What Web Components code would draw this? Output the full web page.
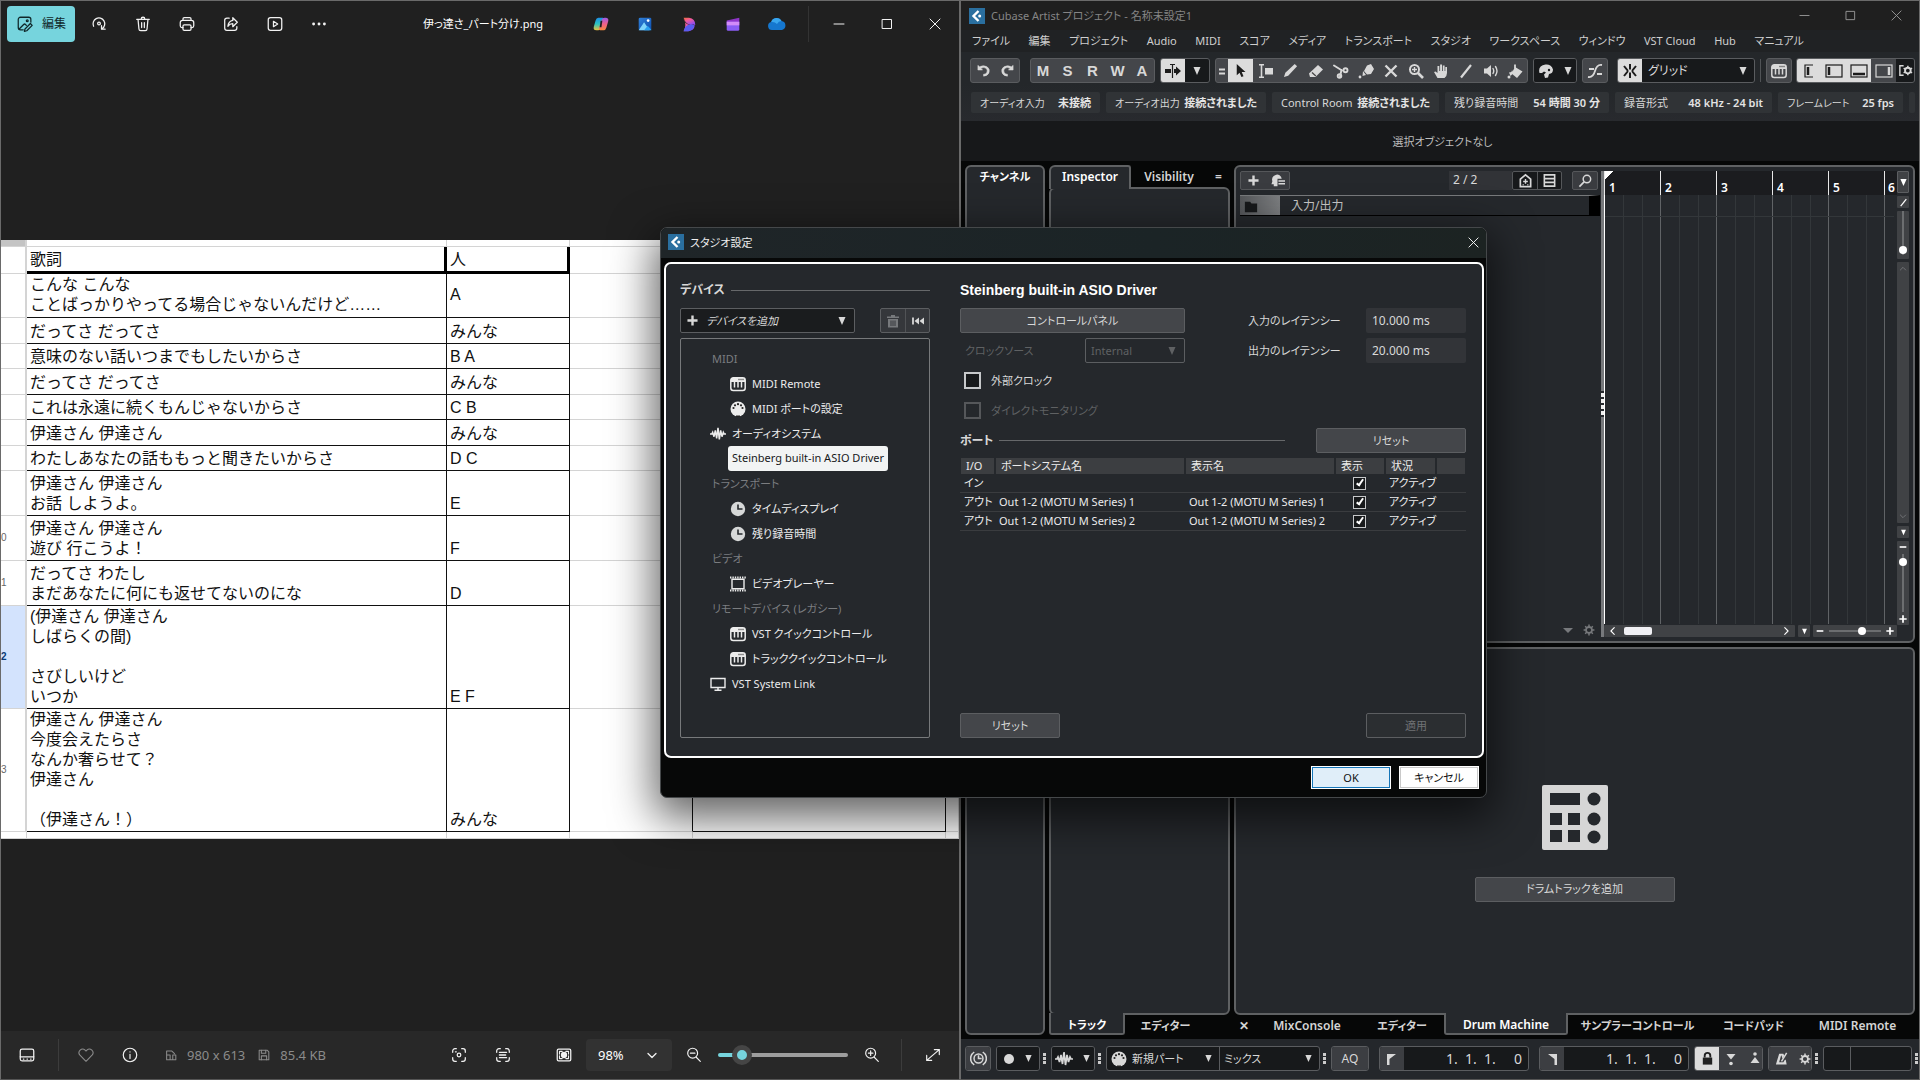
<!DOCTYPE html>
<html lang="ja">
<head>
<meta charset="utf-8">
<title>Desktop</title>
<style>
    html, body { height: 100%; margin: 0; background: #000; overflow: hidden; }
</style>
</head>
<body>
<desk-top>
    <photo-viewer></photo-viewer>
    <daw-window></daw-window>
    <studio-dialog slot="dialog"></studio-dialog>
</desk-top>

<script>
/* ---------- icons: viewBox size + markup ---------- */
const stroke = 'fill="none" stroke="currentColor" stroke-linecap="round" stroke-linejoin="round"';
const ICONS = {
    // photo viewer
    edit:    [20, `<g ${stroke} stroke-width="1.4"><path d="M16.5 8V5a2.5 2.5 0 0 0-2.500-2.500H5A2.500 2.500 0 0 0 2.500 5v9A2.500 2.500 0 0 0 5 16.500h3"/><path d="M3.500 15.500 8.500 10.500q1-1 2 0l1 1"/><circle cx="12.500" cy="6.300" r="1"/><path d="m10 15.500 6-6 2 2-6 6-2.700.7z"/></g>`],
    rotate:  [20, `<g ${stroke} stroke-width="1.4"><path d="M4 12.500A6.500 6.500 0 1 1 13.500 15.200"/><path d="M12.800 11.800v4h4"/><circle cx="10" cy="9.500" r="1.500"/></g>`],
    trash:   [20, `<g ${stroke} stroke-width="1.4"><path d="M3 4.800h14M8 4.500a2 2 0 0 1 4 0M4.500 5l1 10.500a2 2 0 0 0 2 1.900h5a2 2 0 0 0 2-1.900l1-10.500M8.500 8.500v5.500M11.500 8.500v5.500"/></g>`],
    print:   [20, `<g ${stroke} stroke-width="1.4"><path d="M5.500 6V4.500A1.500 1.500 0 0 1 7 3h6a1.500 1.500 0 0 1 1.500 1.500V6M5.500 14H4.500a2 2 0 0 1-2-2V8.500A2.500 2.500 0 0 1 5 6h10a2.500 2.500 0 0 1 2.500 2.500V12a2 2 0 0 1-2 2h-1"/><rect x="5.500" y="11" width="9" height="6" rx="1.500"/></g>`],
    share:   [20, `<g ${stroke} stroke-width="1.4"><path d="M8 3.500H5.500a2.500 2.500 0 0 0-2.500 2.500v8.500A2.500 2.500 0 0 0 5.500 17h8.500a2.500 2.500 0 0 0 2.500-2.500V13"/><path d="M12 3v3C8.500 6.500 7 9 6.500 12.500 8 10.500 9.500 9.700 12 9.700V13l5-5z"/></g>`],
    play:    [20, `<g ${stroke} stroke-width="1.4"><rect x="2.500" y="3" width="15" height="14" rx="2.500"/><path d="m8.300 7 4.700 3-4.700 3z"/></g>`],
    more:    [20, `<g fill="currentColor"><circle cx="4" cy="10" r="1.600"/><circle cx="10" cy="10" r="1.600"/><circle cx="16" cy="10" r="1.600"/></g>`],
    copilot: [20, `<defs><linearGradient id="a" x2="0" y2="1"><stop stop-color="#1d8fe8"/><stop offset=".5" stop-color="#2cc4c0"/><stop offset="1" stop-color="#f0c33a"/></linearGradient><linearGradient id="b" x2="0" y2="1"><stop stop-color="#9a5ce8"/><stop offset=".5" stop-color="#f0608a"/><stop offset="1" stop-color="#f58a3c"/></linearGradient></defs><path d="M7 3h5q2 0 1.300 2L10 15q-.8 2-3 2H5q-4 0-3-4l2-7q.8-3 3-3z" fill="url(#a)"/><path d="M13 17H9q-2 0-1.300-2L11 5q.8-2 3-2h1q4 0 3 4l-2 7q-.8 3-3 3z" fill="url(#b)"/><path d="m9.500 6.500h2L10.500 13.500h-2z" fill="#202020"/>`],
    photo:   [20, `<defs><linearGradient id="a" x2="1" y2="1"><stop stop-color="#2f7fd8"/><stop offset="1" stop-color="#0f4fae"/></linearGradient></defs><rect x="3" y="3" width="14" height="14" rx="1.500" fill="url(#a)"/><path d="M3 17 9 8l6 9z" fill="#7fd4fa"/><path d="m9 17 4-5 4 4.500V17z" fill="#2aa0f0"/><circle cx="13.500" cy="6.200" r="1.500" fill="#fff"/>`],
    designer:[20, `<defs><linearGradient id="a" x2=".6" y2="1"><stop stop-color="#f56a3c"/><stop offset=".45" stop-color="#f25aa0"/><stop offset="1" stop-color="#8f4cf0"/></linearGradient></defs><path d="M4 3h6q7 1 7 8-2-1-5 0Q6 10 4 3z" fill="url(#a)"/><path d="M4 4q1 6 7 7.500 4 1 5.500 0-1 6-7 6.500H4q4-6 0-14z" fill="url(#a)"/><path d="M4 18q1-7 8-7.500 2.500 0 4 1-1.500 6-7 6.500z" fill="#5a5cf0"/>`],
    clip:    [20, `<path d="M3 6 17 3v5H3z" fill="#8f35c8"/><path d="M3 7.500h14V16a1.500 1.500 0 0 1-1.500 1.500h-11A1.500 1.500 0 0 1 3 16z" fill="#8a5cf4"/><path d="M3 7.500h14v4H3z" fill="#d28cf8"/>`],
    cloud:   [20, `<path d="M5 16a4 4 0 0 1-.8-7.900A5.500 5.500 0 0 1 14.500 7a4.600 4.600 0 0 1 .5 9z" fill="#1577cf"/><path d="M4.200 8.100A5.500 5.500 0 0 1 14.500 7q-3 .2-4.500 3Q7.500 7.500 4.200 8.100z" fill="#38a5ee"/>`],
    min:     [12, `<path d="M1 6h10" ${stroke}/>`],
    max:     [12, `<rect x="1.500" y="1.500" width="9" height="9" ${stroke}/>`],
    close:   [12, `<path d="m1 1 10 10M11 1 1 11" ${stroke}/>`],
    film:    [20, `<g ${stroke} stroke-width="1.400"><rect x="2.500" y="3.500" width="15" height="13" rx="2"/><path d="M2.500 12h15M6 14.500h.5M10 14.500h.5M14 14.500h.5"/></g>`],
    heart:   [20, `<path d="M10 17 3.300 10.200a4 4 0 0 1 5.700-5.600l1 1 1-1a4 4 0 0 1 5.700 5.600z" ${stroke} stroke-width="1.200"/>`],
    info:    [20, `<g ${stroke} stroke-width="1.300"><circle cx="10" cy="10" r="7.500"/><path d="M10 9.300v4.500M10 6.500v.2"/></g>`],
    dims:    [16, `<g ${stroke} stroke-width="1.200"><path d="M3 10V3.500h6l3 3M3 13.500V8h4v5.500zM7 13.500h6.500V8H10v5"/></g>`],
    disk:    [16, `<g ${stroke} stroke-width="1.200"><path d="M2.500 2.500h9l2 2v9h-11z"/><path d="M5 2.500V6h5V2.500M5 13.500V9h6v4.500"/></g>`],
    scan:    [20, `<g ${stroke} stroke-width="1.400"><path d="M3 7V5.500A2.500 2.500 0 0 1 5.500 3H7M13 3h1.500A2.500 2.500 0 0 1 17 5.500V7M17 13v1.500a2.500 2.500 0 0 1-2.500 2.500H13M7 17H5.500A2.500 2.500 0 0 1 3 14.500V13"/><circle cx="10" cy="10" r="2"/><path d="M6 6.500h1"/></g>`],
    ocr:     [20, `<g ${stroke} stroke-width="1.400"><path d="M3 7V5.500A2.500 2.500 0 0 1 5.500 3H7M13 3h1.500A2.500 2.500 0 0 1 17 5.500V7M17 13v1.500a2.500 2.500 0 0 1-2.500 2.500H13M7 17H5.500A2.500 2.500 0 0 1 3 14.500V13M6 7h8M6 10h7M6 13h8"/></g>`],
    fit:     [20, `<rect x="2.500" y="3.500" width="15" height="13" rx="1.500" ${stroke} stroke-width="1.400"/><path d="M5 9V6h3M15 9V6h-3M5 11v3h3M15 11v3h-3" ${stroke} stroke-width="1.200"/><circle cx="10" cy="10" r="3.500" fill="currentColor"/>`],
    chev:    [12, `<path d="m2 4.500 4 4 4-4" ${stroke} stroke-width="1.300"/>`],
    zout:    [20, `<g ${stroke} stroke-width="1.300"><circle cx="8.500" cy="8" r="5.500"/><path d="m12.500 12.500 4.500 4.500M6 8h5"/></g>`],
    zin:     [20, `<g ${stroke} stroke-width="1.300"><circle cx="8.500" cy="8" r="5.500"/><path d="m12.500 12.500 4.500 4.500M6 8h5M8.500 5.500v5"/></g>`],
    expand:  [20, `<g ${stroke} stroke-width="1.300"><path d="M11.500 4H17v5.500M8.500 16H3v-5.500M17 4 3 16"/></g>`],
    // DAW
    logo:    [16, `<rect width="16" height="16" fill="#2a6f9f"/><path d="M9.500 3 4.500 8l5 5" fill="none" stroke="#fff" stroke-width="2.400"/><circle cx="10.700" cy="8" r="1.500" fill="#fff"/>`],
    undo:    [16, `<path d="M2 2.500v5h5L5.300 5.800q3-1.700 5.200-.3 2.300 1.800 1 4.500Q10.300 12 8 12v2q4 0 5.700-3.200 1.700-4.300-1.900-6.800-3.800-2.300-8-.1z" fill="currentColor" stroke="currentColor" stroke-width=".5"/>`],
    redo:    [16, `<path d="M14 2.500v5H9l1.700-1.700q-3-1.700-5.200-.3-2.300 1.800-1 4.500Q5.700 12 8 12v2q-4 0-5.700-3.200Q.6 6.500 4.200 4q3.800-2.300 8-.1z" fill="currentColor" stroke="currentColor" stroke-width=".5"/>`],
    ascroll: [16, `<path d="M0 6h6v4H0zM9 6h2V3.500L16 8l-5 4.500V10H9z" fill="currentColor"/><path d="M7.500 2v13M5 1.500h5" stroke="currentColor" stroke-width="1.200"/>`],
    tri:     [10, `<path d="M1.500 1h7L5 9z" fill="currentColor"/>`],
    trilow:  [10, `<path d="M0 3h10L5 8z" fill="currentColor"/>`],
    eq:      [8,  `<path d="M1 2.500h6M1 6.500h6" stroke="currentColor" stroke-width="1.800"/>`],
    arrow:   [16, `<path d="M4 1v12l3-2.600L9 15l2.200-1L9.300 9.500h4z" fill="currentColor"/>`],
    range:   [16, `<path d="M1 1.800h5M1 14.200h5M3.500 2v12" stroke="currentColor" stroke-width="1.600"/><path d="M7 5h8v6.500H7z" fill="currentColor"/>`],
    pencil:  [16, `<path d="m1 15 1.500-4.500L12.500 1 15 3.500 5.500 13.500z" fill="currentColor"/>`],
    eraser:  [16, `<path d="M10 2 15 6.500 7.500 14 2 14 1 10.500z" fill="currentColor"/><path d="m4 9.500 3.800 3.500" stroke="#444" stroke-width="1.200"/>`],
    scissors:[16, `<g ${stroke} stroke-width="1.900"><path d="M1 2.500 9 7.500M7 13.500 8.500 7"/><circle cx="12.500" cy="7.300" r="2"/><circle cx="6.500" cy="13" r="1.800"/></g>`],
    glue:    [16, `<path d="M9 2.500 13 1l3 5-3 5-4 .5-3-3.500zM5 8l3 4-3.500 1z" fill="currentColor"/><circle cx="2" cy="14" r="1.400" fill="currentColor"/>`],
    mute:    [16, `<path d="m2.500 2.500 11 11M13.500 2.500l-11 11" stroke="currentColor" stroke-width="2.400"/>`],
    zoom:    [16, `<circle cx="6.500" cy="6.500" r="4.500" fill="none" stroke="currentColor" stroke-width="2"/><path d="m10 10 5 5" stroke="currentColor" stroke-width="2.600"/><path d="M4 6.500h5M6.500 4v5" stroke="currentColor" stroke-width="1.400"/>`],
    hand:    [16, `<path d="M4.500 15 1 9l1.500-.5L4.500 10V3h1.800v5h.8V1.500H9V8h.8V2.500h1.800V8h.7V4H14v6q0 3-2.500 5z" fill="currentColor"/>`],
    line:    [16, `<path d="M3 14.500 13 2" stroke="currentColor" stroke-width="2.200"/>`],
    speaker: [16, `<path d="M1 5.500h3L8 2v12l-4-3.500H1z" fill="currentColor"/><path d="M10 5.500q1.500 2.500 0 5M12.500 3.500q3 4.500 0 9" ${stroke} stroke-width="1.400"/>`],
    fill:    [16, `<path d="M8 4 15.500 8.500 10 15l-5.500-4.500z" fill="currentColor"/><path d="M8 1.500v4" stroke="currentColor" stroke-width="1.800"/><path d="M2 9.500q3 0 3-2.500l1.500 3-3 3z" fill="currentColor"/><circle cx="2" cy="14" r="1.500" fill="currentColor"/>`],
    palette: [16, `<path d="M7.500 1.500a6.500 6.500 0 0 1 7.500 5q0 4-4 4.500l-1 3.500-3 .5-1-3.500 2-2-2-1-2 1.500H1.500q-2-7 6-8.500z" fill="currentColor"/><circle cx="11" cy="7" r="1.200" fill="#17191b"/>`],
    auto:    [16, `<path d="M1 14q5 1 7-6t7-6M2 6h5M10 11h5" fill="none" stroke="currentColor" stroke-width="1.800"/>`],
    snap:    [16, `<path d="m2 3 4 5-4 5M14 3l-4 5 4 5M8 1v14" fill="none" stroke="currentColor" stroke-width="2"/><path d="M8 6.500v3" stroke="#dcdcdc" stroke-width="3"/>`],
    keys:    [16, `<rect x=".8" y="1.800" width="14.400" height="12.800" rx="2.500" fill="none" stroke="currentColor" stroke-width="1.500"/><path d="M1 2h14v4H1z" fill="currentColor"/><path d="M4.500 6v5.500M8 6v5.500M11.500 6v5.500" stroke="currentColor" stroke-width="1.500"/><path d="M9 2.800v1.400M11 2.800v1.400M13 2.800v1.400" stroke="#333"/>`],
    layA:    [18, `<path d="M13 3H5v12h8" fill="none" stroke="currentColor" stroke-width="1.200"/><path d="M8 5v8" stroke="currentColor" stroke-width="2.500"/>`],
    layB:    [18, `<rect x="1" y="3" width="16" height="12" fill="none" stroke="currentColor" stroke-width="1.200"/><path d="M4 5v8" stroke="currentColor" stroke-width="2.500"/>`],
    layC:    [18, `<rect x="1" y="3" width="16" height="12" fill="none" stroke="currentColor" stroke-width="1.200"/><path d="M3 12h12" stroke="currentColor" stroke-width="2.500"/>`],
    layD:    [18, `<rect x="1" y="3" width="16" height="12" fill="none" stroke="currentColor" stroke-width="1.200"/><path d="M14 5v8" stroke="currentColor" stroke-width="2.500"/>`],
    laySet:  [16, `<path d="M6 3H2v10h4" fill="none" stroke="currentColor" stroke-width="1.500"/><circle cx="10.500" cy="8" r="3" fill="none" stroke="currentColor" stroke-width="2"/><path d="M10.500 3v1.800M10.500 11.200V13M6 5.500l1.700 1M13.300 9.500l1.700 1M6 10.500l1.700-1M13.300 6.500l1.700-1" stroke="currentColor" stroke-width="1.600"/>`],
    plus:    [12, `<path d="M6 .5v11M.5 6h11" stroke="currentColor" stroke-width="2.600"/>`],
    minus:   [12, `<path d="M1 6h10" stroke="currentColor" stroke-width="2.400"/>`],
    preset:  [16, `<path d="M6 2a5 5 0 0 1 6.500 4H8v8H4v-2H1.500l1-3Q1 4 6 2z" fill="currentColor"/><path d="M9 8.500h7M9 11.500h7" stroke="currentColor" stroke-width="1.600"/>`],
    house:   [16, `<path d="M2.500 14.500v-8L8 2l5.500 4.500v8z" fill="none" stroke="currentColor" stroke-width="1.800"/><path d="M5.500 9h5M8 6.500v5M5 12.500h1M10 12.500h1" stroke="currentColor" stroke-width="1.500"/>`],
    rows:    [16, `<path d="M2.500 2h11v12h-11zM3 6h10M3 10h10" fill="none" stroke="currentColor" stroke-width="1.700"/>`],
    search:  [16, `<circle cx="9.500" cy="6.500" r="4" fill="none" stroke="currentColor" stroke-width="1.600"/><path d="m6.500 9.500-5 5" stroke="currentColor" stroke-width="1.800"/>`],
    folder:  [16, `<path d="M1 2h6l1.500 2H15v10H1z" fill="currentColor"/>`],
    gear:    [16, `<circle cx="8" cy="8" r="4" fill="none" stroke="currentColor" stroke-width="2.400"/><path d="M8 .8v3M8 12.200v3M.8 8h3M12.200 8h3M2.900 2.900l2 2M11.100 11.100l2 2M2.900 13.100l2-2M11.100 4.900l2-2" stroke="currentColor" stroke-width="2"/>`],
    pads:    [66, `<rect width="66" height="65" rx="2" fill="#d6d6d6"/><g fill="#25282c"><path d="M8 8h30v12H8zM8 28h12v12H8zM26 28h12v12H26zM8 45h12v12H8zM26 45h12v12H26z"/><circle cx="52" cy="14" r="6.500"/><circle cx="52" cy="34" r="6.500"/><circle cx="52" cy="52" r="6.500"/></g>`],
    perf:    [16, `<circle cx="8" cy="8" r="4.200" fill="none" stroke="currentColor" stroke-width="1.400"/><path d="M8 5v3h3M4 2a7 7 0 0 0 0 12M12 2a7 7 0 0 1 0 12" fill="none" stroke="currentColor" stroke-width="1.500"/>`],
    dot:     [12, `<circle cx="6" cy="6" r="5" fill="currentColor"/>`],
    wave:    [18, `<path d="M0 9h2l1-2 1.500 5L6 5l1.500 9L9 2l1.500 13L12 5l1.500 7L15 7l1 2h2" fill="none" stroke="currentColor" stroke-width="1.700"/>`],
    din:     [16, `<circle cx="8" cy="8" r="7.500" fill="currentColor"/><g fill="#222"><circle cx="3.500" cy="7" r="1.100"/><circle cx="5" cy="4.300" r="1.100"/><circle cx="8" cy="3.200" r="1.100"/><circle cx="11" cy="4.300" r="1.100"/><circle cx="12.500" cy="7" r="1.100"/><path d="M6 14.500h4v1.500H6z"/></g>`],
    locL:    [12, `<path d="M1 1h9L3.500 6v6H1z" fill="currentColor"/>`],
    locR:    [12, `<path d="M11 1H2l6.500 5v6H11z" fill="currentColor"/>`],
    lock:    [16, `<rect x="3" y="7" width="10" height="7.500" fill="currentColor"/><path d="M5 7V5a3 3 0 0 1 6 0v2" fill="none" stroke="currentColor" stroke-width="2"/>`],
    pin:     [16, `<path d="M3.500 3h9L8 8.500z" fill="currentColor"/><circle cx="8" cy="12.500" r="1.800" fill="currentColor"/>`],
    pout:    [16, `<path d="M3.500 12h9L8 6z" fill="currentColor"/><circle cx="8" cy="3" r="1.800" fill="currentColor"/>`],
    metro:   [16, `<path fill-rule="evenodd" d="M5.500 3H10l1 2-2 3-1-3.200h-.5L5.500 12H10l1-2 1.500-1 1 5.500H2z" fill="currentColor"/><path d="m8 11 5.500-9" stroke="currentColor" stroke-width="1.600"/>`],
    clock:   [16, `<circle cx="8" cy="8" r="7.200" fill="#d6d8d8"/><path d="M8 3.500V8h4.500" fill="none" stroke="#25282c" stroke-width="1.600"/>`],
    strip:   [16, `<path d="M0 1.500h16M0 14.500h16" stroke="currentColor" stroke-width="1.800" stroke-dasharray="1.400 1"/><path d="M2 3.200h12v9.600H2z" fill="none" stroke="currentColor" stroke-width="1.400"/>`],
    monitor: [16, `<path d="M1 2.500h14v9H1z" fill="none" stroke="currentColor" stroke-width="1.400"/><path d="M8 12v2M4.500 14.200h7" stroke="currentColor" stroke-width="1.500"/>`],
    bin:     [14, `<path d="M1 2.500h12v1.600H1zM5 1h4v1.500H5zM2 5h10v8.500H2z" fill="currentColor"/><path d="M5 6.500v5.500M7 6.500v5.500M9 6.500v5.500" stroke="#35373b"/>`],
    rewind:  [14, `<path d="M2 3.500v7" stroke="currentColor" stroke-width="1.800"/><path d="M8 3.500v7L3.500 7zM13 3.500v7L8.500 7z" fill="currentColor"/>`],
};

class UiIcon extends HTMLElement {
    constructor() {
        super();
        this.attachShadow({ mode: 'open' });
    }

    connectedCallback() {
        const [box, body] = ICONS[this.getAttribute('name')];
        const size = this.getAttribute('size') ?? 16;
        this.shadowRoot.innerHTML = `
            <style>
                :host { display: inline-flex; flex: none; }
                svg { display: block; }
            </style>
            <svg width="${size}" height="${size}" viewBox="0 0 ${box} ${box}" aria-hidden="true">${body}</svg>`;
    }
}

const icon = (name, size = 16) => `<ui-icon name="${name}" size="${size}"></ui-icon>`;
const iconBtn = (name, label, size = 16, cls = '') =>
    `<button type="button" class="${cls}" aria-label="${label}">${icon(name, size)}</button>`;

const RESET = `
    *, *::before { box-sizing: border-box; }
    button, select, input { font: inherit; color: inherit; margin: 0; font-feature-settings: inherit; }
    button { padding: 0; border: 0; background: none; display: flex; align-items: center; justify-content: center; white-space: nowrap; }
    select { appearance: none; border: 0; background: none; padding: 0; outline: none; min-width: 0; opacity: 1; }
    option { color: #000; }
`;

/* Base: shadow root filled from the class's css and html */
class View extends HTMLElement {
    constructor() {
        super();
        this.attachShadow({ mode: 'open' }).innerHTML =
            `<style>${RESET}${this.constructor.css}</style>${this.constructor.html}`;
    }
}

class DeskTop extends View {
    static css = `
        :host {
            display: grid;
            grid-template-columns: 1fr 1fr;
            position: relative;
            height: 100vh;
            overflow: hidden;
            font: 12px/16px "Noto Sans", "Noto Sans CJK JP", sans-serif;
            font-feature-settings: "palt";
            color: #d8d8d8;
        }
        ::slotted(studio-dialog) { position: absolute; left: 660px; top: 227px; }
    `;
    static html = `<slot></slot><slot name="dialog"></slot>`;
}

/* ---------- photo viewer ---------- */
class PhotoViewer extends View {
    static css = `
        :host {
            display: flex;
            flex-direction: column;
            min-width: 0;
            background: #202020;
            border: 1px solid #6a6a6a;
            border-bottom-color: #555;
            color: #f2f2f2;
        }
        main { flex: 1; min-height: 0; display: flex; align-items: center; overflow: hidden; }
        lyric-sheet { flex: 1; }
    `;
    static html = `
        <photo-toolbar></photo-toolbar>
        <main><lyric-sheet></lyric-sheet></main>
        <photo-footer></photo-footer>`;
}

class PhotoToolbar extends View {
    static css = `
        :host { display: grid; grid-template-columns: 1fr auto 1fr; align-items: center; height: 47px; padding: 0 0 2px 6px; }
        .left, .right { display: flex; align-items: center; }
        .right { justify-content: flex-end; }
        button { width: 44px; height: 36px; }
        .edit { width: 68px; gap: 8px; margin-right: 2px; border-radius: 4px; background: #76d4dd; color: #10282a; }
        .win { width: 48px; }
        .sep { width: 1px; height: 36px; margin: 0 6px 0 9px; background: #333; }
        h1 { margin: 0; font-size: 11px; font-weight: 400; color: #fff; }
    `;
    static html = `
        <div class="left">
            <button type="button" class="edit">${icon('edit', 18)}編集</button>
            ${iconBtn('rotate', '回転', 18)}${iconBtn('trash', '削除', 18)}${iconBtn('print', '印刷', 18)}
            ${iconBtn('share', '共有', 18)}${iconBtn('play', 'スライドショー', 18)}${iconBtn('more', 'もっと見る', 18)}
        </div>
        <h1>伊っ達さ_パート分け.png</h1>
        <div class="right">
            ${iconBtn('copilot', 'Copilot', 18)}${iconBtn('photo', 'フォト', 18)}${iconBtn('designer', 'Designer', 18)}
            ${iconBtn('clip', 'Clipchamp', 18)}${iconBtn('cloud', 'OneDrive', 20)}
            <span class="sep"></span>
            ${iconBtn('min', '最小化', 12, 'win')}${iconBtn('max', '最大化', 12, 'win')}${iconBtn('close', '閉じる', 12, 'win')}
        </div>`;
}

class PhotoFooter extends View {
    static css = `
        :host { display: flex; align-items: center; justify-content: space-between; height: 48px; background: #282828; font-size: 13px; }
        .side { display: flex; align-items: center; }
        button { width: 44px; height: 32px; }
        .sep { width: 1px; height: 32px; background: #3c3c3c; }
        .first { width: 52px; margin-right: 5px; }
        .sep + button { margin-left: 5px; }
        .meta { display: flex; align-items: center; gap: 9px; margin-left: 12px; color: #8b8b8b; }
        .dim { color: #8b8b8b; }
        .scale { display: flex; align-items: center; width: 86px; height: 32px; border-radius: 4px; background: #323232; }
        .scale select { width: 100%; height: 100%; padding-left: 12px; color: #fff; }
        .scale ui-icon { margin-left: -26px; pointer-events: none; }
        .gap { width: 17px; }
        input { appearance: none; width: 130px; height: 20px; margin: 0 2px; background: none; }
        input::-webkit-slider-runnable-track { height: 4px; border-radius: 2px; background: linear-gradient(90deg, #76d4dd 17%, #9d9d9d 17%); }
        input::-webkit-slider-thumb { appearance: none; width: 20px; height: 20px; margin-top: -8px; border-radius: 50%; border: 5px solid #454545; background: #76d4dd; }
        .last { width: 52px; }
    `;
    static html = `
        <div class="side">
            ${iconBtn('film', 'フィルムストリップ', 18, 'first')}
            <span class="sep"></span>
            ${iconBtn('heart', 'お気に入り', 18, 'dim')}${iconBtn('info', '情報', 18)}
            <span class="meta">${icon('dims', 14)}980 x 613</span>
            <span class="meta">${icon('disk', 14)}85.4 KB</span>
        </div>
        <div class="side">
            ${iconBtn('scan', 'ビジュアル検索', 18)}${iconBtn('ocr', 'テキストスキャン', 18)}
            <span class="gap"></span>
            ${iconBtn('fit', 'ウィンドウに合わせる', 18)}
            <span class="scale"><select aria-label="表示倍率"><option>98%</option></select>${icon('chev', 12)}</span>
            ${iconBtn('zout', '縮小', 18)}
            <input type="range" value="13" aria-label="ズーム">
            ${iconBtn('zin', '拡大', 18)}
            <span class="sep" style="margin-left:7px"></span>
            ${iconBtn('expand', '全画面', 18, 'last')}
        </div>`;
}

/* row height, row number, words, singer, class */
const LYRICS = [
    [27, '', '歌詞', '人', 'head'],
    [44, '', 'こんな こんな\nことばっかりやってる場合じゃないんだけど……', 'A', 'mid'],
    [26, '', 'だってさ だってさ', 'みんな'],
    [25, '', '意味のない話いつまでもしたいからさ', 'B A'],
    [26, '', 'だってさ だってさ', 'みんな'],
    [25, '', 'これは永遠に続くもんじゃないからさ', 'C B'],
    [26, '', '伊達さん 伊達さん', 'みんな'],
    [25, '', 'わたしあなたの話ももっと聞きたいからさ', 'D C'],
    [45, '', '伊達さん 伊達さん\nお話 しようよ。', 'E'],
    [45, '0', '伊達さん 伊達さん\n遊び 行こうよ！', 'F'],
    [45, '1', 'だってさ わたし\nまだあなたに何にも返せてないのにな', 'D'],
    [103, '2', '(伊達さん 伊達さん\nしばらくの間)\n\nさびしいけど\nいつか', 'E F', 'sel'],
    [123, '3', '伊達さん 伊達さん\n今度会えたらさ\nなんか奢らせて？\n伊達さん\n\n（伊達さん！）', 'みんな', 'last'],
];

class LyricSheet extends View {
    static css = `
        :host {
            display: block;
            background: #fff;
            color: #111;
            font: 16px/20px "Liberation Sans", "Noto Sans CJK JP", sans-serif;
            font-feature-settings: normal;
        }
        table { width: 100%; table-layout: fixed; border-collapse: separate; border-spacing: 0; }
        td, th { padding: 0 3px 1px; border: 0 solid #d4d4d4; border-width: 0 1px 1px 0; vertical-align: bottom; text-align: left; font-weight: 400; white-space: pre; }
        th { padding: 0; vertical-align: middle; font-size: 10px; color: #666; border-right-width: 2px; }
        .edge td, .edge th { height: 7px; padding: 0; }
        .edge th { background: #c4c4c4; }
        .cell { border-color: #111; }
        .head .cell { border-width: 0 3px 3px 0; border-color: #000; }
        .mid td { vertical-align: middle; }
        .sel th { background: #d3e3fd; color: #0b3a75; font-weight: 700; }
        .last .open { border-right-color: #111; }
        .last .box { border-color: #111; }
    `;
    static html = `
        <table aria-label="パート分け">
            <colgroup><col style="width:26px"><col style="width:420px"><col style="width:123px"><col style="width:123px"><col style="width:253px"><col></colgroup>
            <tr class="edge"><th></th><td></td><td></td><td></td><td></td><td></td></tr>
            ${LYRICS.map(([h, no, words, who, cls = '']) => `
            <tr class="${cls}" style="height:${h}px"><th scope="row">${no}</th><td class="cell">${words}</td><td class="cell">${who}</td><td class="open"></td><td class="box"></td><td></td></tr>`).join('')}
            <tr class="edge"><td></td><td></td><td></td><td></td><td></td><td></td></tr>
        </table>`;
}

/* ---------- DAW ---------- */
class DawWindow extends View {
    static css = `
        :host { display: flex; flex-direction: column; min-width: 0; background: #060707; border: 1px solid #6a6a6a; border-bottom-color: #555; }
        header { display: flex; align-items: center; height: 29px; padding-left: 8px; background: #1f1f1f; color: #858585; }
        header > ui-icon { margin-right: 6px; }
        h1 { flex: 1; margin: 0; font-size: 11px; font-weight: 400; }
        header button { width: 46px; height: 28px; color: #999; }
        .info { height: 40px; display: flex; align-items: center; justify-content: center; background: #17181a; color: #bdbdbd; font-size: 11px; padding: 2px 0 0 5px; }
        .zones { flex: 1; min-height: 0; display: grid; grid-template-columns: 80px 181px 1fr; gap: 4px; padding: 4px; }
        .channel { border: 2px solid #5f6163; border-radius: 6px; background: #25282c; text-align: center; font-size: 11px; font-weight: 700; color: #fff; padding-top: 2px; }
        .column { display: flex; flex-direction: column; gap: 4px; min-width: 0; min-height: 0; }
        track-zone { flex: 466 1 0; min-height: 0; }
        .lower { flex: 388 1 0; }
        .drum { flex: 1; display: flex; flex-direction: column; align-items: center; justify-content: center; gap: 26px; padding-top: 24px; }
        .drum button { width: 200px; height: 25px; border: 1px solid #5c5e61; border-radius: 2px; background: #44464a; font-size: 11px; }
    `;
    static html = `
        <header>${icon('logo')}<h1>Cubase Artist プロジェクト - 名称未設定1</h1>
            ${iconBtn('min', '最小化', 11)}${iconBtn('max', '最大化', 11)}${iconBtn('close', '閉じる', 11)}</header>
        <daw-menu></daw-menu>
        <daw-tools></daw-tools>
        <daw-status></daw-status>
        <div class="info">選択オブジェクトなし</div>
        <div class="zones">
            <div class="channel">チャンネル</div>
            <tab-zone>
                <tab-strip slot="top" active="0" tabs="Inspector:82,Visibility:76,=:23"></tab-strip>
                <tab-strip slot="bottom" active="0" tabs="トラック:76,エディター:81"></tab-strip>
            </tab-zone>
            <div class="column">
                <track-zone></track-zone>
                <tab-zone class="lower">
                    <div class="drum">${icon('pads', 66)}<button type="button">ドラムトラックを追加</button></div>
                    <tab-strip slot="bottom" active="3" tabs="✕:20,MixConsole:106,エディター:84,Drum Machine:124,サンプラーコントロール:139,コードパッド:93,MIDI Remote:115"></tab-strip>
                </tab-zone>
            </div>
        </div>
        <transport-bar></transport-bar>`;
}

/* Bordered zone whose active tab grows out of its edge */
class TabZone extends View {
    static css = `
        :host { display: flex; flex-direction: column; min-width: 0; min-height: 0; }
        .body { flex: 1; min-height: 0; display: flex; border: 2px solid #5f6163; border-radius: 6px; background: #25282c; }
    `;
    static html = `<slot name="top"></slot><div class="body"><slot></slot></div><slot name="bottom"></slot>`;
}

/* tabs="label:width,..." */
class TabStrip extends HTMLElement {
    constructor() {
        super();
        this.attachShadow({ mode: 'open' });
    }

    connectedCallback() {
        const active = +this.getAttribute('active');
        const tabs = this.getAttribute('tabs').split(',').map(t => t.split(':'));
        const cls = (label, i) => (i === active ? 'active ' : '') + (/[ァ-ヶ]/.test(label) ? 'kana' : '');
        this.shadowRoot.innerHTML = `
            <style>
                ${RESET}
                :host { display: flex; z-index: 1; }
                :host([slot=top]) { height: 24px; margin-bottom: -2px; }
                :host([slot=bottom]) { height: 22px; margin-top: -2px; }
                button { flex-shrink: 1; font-size: 12px; font-weight: 600; color: #d4d4d4; min-width: 0; }
                .kana { font-size: 11px; }
                :host([slot=bottom]) button { padding-top: 4px; }
                .active { color: #fff; background: #25282c; border: 2px solid #5f6163; }
                :host([slot=top]) .active { padding-bottom: 2px; border-bottom: 0; border-radius: 6px 3px 0 0; }
                :host([slot=bottom]) .active { border-top: 0; border-radius: 0 0 3px 3px; }
            </style>
            ${tabs.map(([label, w], i) =>
                `<button type="button" class="${cls(label, i)}" style="width:${w}px">${label}</button>`).join('')}`;
    }
}

class DawMenu extends View {
    static css = `
        :host { display: block; background: #202224; }
        nav { display: flex; justify-content: space-between; width: 88%; height: 22px; padding-left: 11px; }
        button { font-size: 11px; color: #cfcfcf; }
    `;
    static html = `<nav>${['ファイル', '編集', 'プロジェクト', 'Audio', 'MIDI', 'スコア', 'メディア', 'トランスポート', 'スタジオ', 'ワークスペース', 'ウィンドウ', 'VST Cloud', 'Hub', 'マニュアル']
        .map(m => `<button type="button">${m}</button>`).join('')}</nav>`;
}

class DawTools extends View {
    static css = `
        :host { display: flex; padding: 6px 4px 0 9px; background: #24272a; overflow: hidden; }
        .g { display: flex; flex: none; height: 25px; border: 1px solid #5a5c5f; border-radius: 3px; background: #44464a; overflow: hidden; }
        .g > * { width: 25px; height: 23px; }
        .g > :first-child, .g > :last-child { width: 24px; }
        .txt button { font: 700 15px "Liberation Sans", sans-serif; }
        .g > .on { background: #dcdcdc; color: #1c1c1c; }
        .g > .dark { background: #17191b; }
        .g > .grip { width: 12px; }
        .g > .wide { width: 42px; gap: 9px; background: #17191b; }
        .combo { display: flex; align-items: center; background: #17191b; }
        .g > .combo { width: 112px; }
        .combo select { flex: 1; height: 23px; padding-left: 6px; }
        .combo ui-icon { margin: 0 6px 0 -16px; pointer-events: none; }
        .g > .thin { width: 18px; }
        .sep { width: 1px; height: 23px; margin: 1px 5px; background: #505356; }
    `;
    static html = `
        <div class="g" style="margin-right:10px">${iconBtn('undo', '元に戻す', 15)}${iconBtn('redo', 'やり直す', 15)}</div>
        <div class="g txt" style="margin-right:5px">${[...'MSRWA'].map(c => `<button type="button">${c}</button>`).join('')}</div>
        <div class="g" style="margin-right:5px">${iconBtn('ascroll', 'オートスクロール', 16, 'on')}${iconBtn('tri', '設定', 10, 'dark')}</div>
        <div class="g" style="margin-right:5px">
            ${iconBtn('eq', 'ツール', 8, 'grip')}${iconBtn('arrow', '選択', 15, 'on')}${iconBtn('range', '範囲選択')}${iconBtn('pencil', '鉛筆', 15)}${iconBtn('eraser', '消しゴム')}${iconBtn('scissors', 'はさみ')}${iconBtn('glue', 'のり')}${iconBtn('mute', 'ミュート')}${iconBtn('zoom', 'ズーム')}${iconBtn('hand', '手')}${iconBtn('line', 'ライン')}${iconBtn('speaker', '再生')}${iconBtn('fill', 'カラー')}
        </div>
        <div class="g" style="margin-right:5px"><button type="button" class="wide" aria-label="カラーメニュー">${icon('palette')}${icon('tri', 10)}</button></div>
        <div class="g" style="margin-right:9px">${iconBtn('auto', 'オートメーション')}</div>
        <div class="g">${iconBtn('snap', 'スナップ', 16, 'on')}<span class="combo"><select aria-label="スナップタイプ"><option>グリッド</option></select>${icon('tri', 10)}</span></div>
        <span class="sep"></span>
        <div class="g" style="margin-right:4px">${iconBtn('keys', 'キーボード')}</div>
        <div class="g">${iconBtn('layA', 'チャンネルゾーン', 18, 'on')}${iconBtn('layB', '左ゾーン', 18, 'on')}${iconBtn('layC', '下ゾーン', 18, 'on')}${iconBtn('layD', '右ゾーン', 18)}${iconBtn('laySet', 'レイアウト設定', 15, 'dark thin')}</div>`;
}

class DawStatus extends View {
    static css = `
        :host {
            display: grid;
            grid-template-columns: 129fr 160fr 167fr 164fr 157fr 125fr 6px;
            gap: 6px;
            padding: 9px 4px 8px 10px;
            background: linear-gradient(#24272a, #282a2e);
            font-size: 11px;
        }
        div { display: flex; justify-content: space-between; align-items: center; height: 21px; padding: 0 9px; border-radius: 2px; background: #303336; white-space: nowrap; overflow: hidden; }
        div:last-child { padding: 0; }
        b { font-weight: 600; color: #e4e4e4; }
        .kana { font-size: 10px; }
    `;
    static html = [['オーディオ入力', '未接続'], ['オーディオ出力', '接続されました'], ['Control Room', '接続されました'], ['残り録音時間', '54 時間 30 分'], ['録音形式', '48 kHz - 24 bit'], ['フレームレート', '25 fps']]
        .map(([k, v]) => `<div><span class="${/[ァ-ヶ]/.test(k) ? 'kana' : ''}">${k}</span><b>${v}</b></div>`).join('') + '<div></div>';
}

class TrackZone extends View {
    static css = `
        :host { display: grid; grid-template-columns: 361fr 3px 293fr 12px; padding: 4px; border: 2px solid #5f6163; border-radius: 6px; background: #25282c; }
        .tracks { display: flex; flex-direction: column; min-width: 0; padding-right: 1px; }
        .bar { display: flex; height: 19px; margin-bottom: 5px; }
        .g { display: flex; border: 1px solid #55575a; border-radius: 2px; background: #3a3c40; }
        .g button { width: 24px; }
        .count { width: 63px; margin-left: auto; padding: 1px 4px; background: #313337; font-size: 12px; }
        .dark { background: #17191b; margin-right: 10px; }
        .dark button + button { border-left: 1px solid #55575a; }
        .bar .find { margin-right: 2px; }
        .track { display: flex; align-items: center; height: 21px; border-top: 1px solid #77797b; border-bottom: 1px solid #000; border-right: 11px solid #000; }
        .track i { width: 40px; height: 19px; padding: 4px; background: linear-gradient(90deg, #55575a, #7c7e80); color: #17191b; }
        .track span { padding-left: 11px; color: #c8c8c8; font-size: 12px; }
        .foot { display: flex; justify-content: flex-end; align-items: center; gap: 10px; margin-top: auto; padding: 0 5px 1px; color: #77797c; }
        .split { display: flex; align-items: center; justify-content: center; background: #77797c; }
        .split i { width: 3px; height: 26px; background: repeating-linear-gradient(#25282c 0 2px, #eee 2px 6px); }
        .arrange { display: flex; flex-direction: column; min-width: 0; }
        .ruler { display: flex; height: 24px; overflow: hidden; background: #1b1c1f; font-size: 12px; font-weight: 600; color: #fff; }
        .ruler span { flex: none; width: 56px; height: 24px; padding: 9px 0 0 4px; border-left: 1px solid #e8e8e8; }
        .ruler span:last-child { width: 13px; padding-left: 3px; }
        .ruler span:first-child { background: linear-gradient(135deg, #fff 6px, transparent 6px); }
        .grid {
            flex: 1;
            margin-right: 3px;
            border-left: 1px solid #fff;
            background:
                linear-gradient(#33373a, #33373a) 0 21px / 100% 1px no-repeat,
                repeating-linear-gradient(90deg, transparent 0 55px, #606366 55px 56px),
                repeating-linear-gradient(90deg, transparent 0 18px, #33373a 18px 19px, transparent 19px 37px, #33373a 37px 38px, transparent 38px 56px);
        }
        .hbar { display: flex; gap: 3px; height: 12px; margin-top: 1px; }
        .hbar > *, .vbar > * { background: #404245; border-radius: 1px; color: #fff; }
        .scroll { flex: 1; display: flex; align-items: center; padding: 0 4px; }
        .scroll::before { content: ""; order: 1; width: 28px; height: 8px; margin-left: 6px; border-radius: 2px; background: #f0f0f4; }
        .scroll ui-icon:last-child { order: 2; margin-left: auto; }
        .lt { transform: rotate(90deg); }
        .gt { transform: rotate(-90deg); }
        .hz { width: 84px; display: flex; align-items: center; justify-content: space-between; padding: 0 3px; }
        .hz input { width: 52px; }
        .sq { width: 12px; height: 12px; }
        .vbar { display: flex; flex-direction: column; gap: 3px; padding-bottom: 12px; }
        .vbar .down { height: 22px; border: 1px solid #5c5e61; }
        .vs { height: 48px; display: flex; justify-content: center; }
        .vscroll { flex: 1; display: flex; flex-direction: column; align-items: center; justify-content: space-between; padding: 3px 0; }
        .vbar .vscroll { color: #77797c; }
        .up { transform: rotate(180deg); }
        .vz { height: 84px; display: flex; flex-direction: column; align-items: center; justify-content: space-between; padding: 2px 0; }
        input { appearance: none; background: linear-gradient(#6c6e70, #6c6e70) center / 100% 2px no-repeat; height: 10px; }
        input.v { writing-mode: vertical-lr; direction: rtl; width: 10px; height: 44px; background-size: 2px 100%; }
        .vz input.v { height: 58px; }
        input::-webkit-slider-thumb { appearance: none; width: 8px; height: 8px; border-radius: 50%; background: #fff; }
    `;
    static html = `
        <div class="tracks">
            <div class="bar">
                <div class="g">${iconBtn('plus', 'トラックを追加', 11)}${iconBtn('preset', 'プリセット', 15)}</div>
                <span class="count">2 / 2</span>
                <div class="g dark">${iconBtn('house', 'トラックの表示', 15)}${iconBtn('rows', 'リスト', 15)}</div>
                <div class="g find">${iconBtn('search', '検索', 15)}</div>
            </div>
            <div class="track"><i>${icon('folder', 14)}</i><span>入力/出力</span></div>
            <div class="foot">${icon('trilow', 10)}${icon('gear', 12)}</div>
        </div>
        <div class="split"><i></i></div>
        <div class="arrange">
            <div class="ruler">${[1, 2, 3, 4, 5, 6].map(n => `<span>${n}</span>`).join('')}</div>
            <div class="grid"></div>
            <div class="hbar">
                <div class="scroll"><ui-icon class="lt" name="chev" size="10"></ui-icon><ui-icon class="gt" name="chev" size="10"></ui-icon></div>
                ${iconBtn('tri', 'ズームメニュー', 7, 'sq')}
                <div class="hz">${icon('minus', 8)}<input type="range" value="66" aria-label="横ズーム">${icon('plus', 8)}</div>
            </div>
        </div>
        <div class="vbar">
            ${iconBtn('tri', 'ルーラー', 9, 'down')}
            ${iconBtn('line', '鉛筆', 9, 'sq')}
            <div class="vs"><input class="v" type="range" value="4" aria-label="波形ズーム"></div>
            <div class="vscroll"><ui-icon class="up" name="chev" size="8"></ui-icon>${icon('chev', 8)}</div>
            ${iconBtn('tri', 'ズームメニュー', 7, 'sq')}
            <div class="vz">${icon('minus', 8)}<input class="v" type="range" value="92" aria-label="縦ズーム">${icon('plus', 8)}</div>
        </div>`;
}

class TransportBar extends View {
    static css = `
        :host { display: flex; align-items: flex-start; height: 40px; padding: 7px 4px 0; background: #24272b; overflow: hidden; }
        .g { display: flex; flex: none; height: 25px; border: 1px solid #5a5c5f; border-radius: 3px; background: #17191b; overflow: hidden; }
        .g button { flex: none; width: 24px; height: 23px; background: #3c3e42; }
        .g .on { background: #dcdcdc; color: #222; }
        .pair button { width: 42px; gap: 9px; background: #17191b; }
        .dots { flex: none; width: 3px; height: 11px; margin: 7px 5px 0 3px; background: repeating-linear-gradient(#ccc 0 3px, transparent 3px 4px); }
        .combo { display: flex; align-items: center; gap: 5px; padding: 0 6px 0 4px; font-size: 11px; }
        .combo + .combo { border-left: 1px solid #5a5c5f; }
        .combo select { flex: 1; height: 23px; }
        .pos { flex: 1; align-self: center; text-align: right; padding-right: 6px; font-size: 14px; white-space: pre; }
        .meter { width: 27px; border-right: 1px solid #5a5c5f; }
    `;
    static html = `
        <div class="g" style="margin-right:5px">${iconBtn('perf', 'オーディオパフォーマンス', 17)}</div>
        <div class="g pair"><button type="button" aria-label="録音モード">${icon('dot', 12)}${icon('tri', 9)}</button></div>
        <span class="dots"></span>
        <div class="g pair"><button type="button" aria-label="オーディオ録音モード">${icon('wave', 18)}${icon('tri', 9)}</button></div>
        <span class="dots"></span>
        <div class="g">
            <span class="combo" style="width:112px">${icon('din', 16)}<select aria-label="MIDI 録音"><option>新規パート</option></select>${icon('tri', 9)}</span>
            <span class="combo" style="width:100px"><select aria-label="サイクル録音"><option>ミックス</option></select>${icon('tri', 9)}</span>
        </div>
        <span class="dots"></span>
        <div class="g" style="margin-right:10px"><button type="button" style="width:36px">AQ</button></div>
        <div class="g" style="width:150px;margin-right:10px">${iconBtn('locL', '左ロケーター', 12)}<span class="pos">1.  1.  1.     0</span></div>
        <div class="g" style="width:150px;margin-right:5px">${iconBtn('locR', '右ロケーター', 12)}<span class="pos">1.  1.  1.     0</span></div>
        <div class="g" style="width:69px;margin-right:5px">${iconBtn('lock', 'ロック', 15, 'on')}${iconBtn('pin', 'パンチイン')}${iconBtn('pout', 'パンチアウト')}</div>
        <div class="g" style="width:44px">${iconBtn('metro', 'メトロノーム', 15)}${iconBtn('gear', '設定', 12)}</div>
        <span class="dots"></span>
        <div class="g" style="width:89px"><span class="meter"></span></div>
        <span class="dots"></span>`;
}

/* ---------- dialog ---------- */
const DEVICES = [
    ['group', 'MIDI'], ['item', 'MIDI Remote', 'keys'], ['item', 'MIDI ポートの設定', 'din'],
    ['root', 'オーディオシステム', 'wave'], ['item picked', 'Steinberg built-in ASIO Driver'],
    ['group', 'トランスポート'], ['item', 'タイムディスプレイ', 'clock'], ['item', '残り録音時間', 'clock'],
    ['group', 'ビデオ'], ['item', 'ビデオプレーヤー', 'strip'],
    ['group', 'リモートデバイス (レガシー)'], ['item', 'VST クイックコントロール', 'keys'], ['item', 'トラッククイックコントロール', 'keys'],
    ['root', 'VST System Link', 'monitor'],
];

class StudioDialog extends View {
    static css = `
        :host {
            display: flex;
            flex-direction: column;
            width: 825px;
            height: 569px;
            border: 1px solid #45484a;
            border-radius: 7px;
            background: #070808;
            box-shadow: 0 14px 44px 6px rgba(0, 0, 0, 0.62);
            overflow: hidden;
            font-size: 11px;
        }
        header { display: flex; align-items: center; height: 30px; padding: 0 3px 1px 7px; background: linear-gradient(90deg, #1f2528, #1b2426 60%, #1c2322); }
        h2 { flex: 1; margin: 0 0 0 6px; font-size: 11px; font-weight: 400; color: #eee; }
        header > ui-icon { margin-bottom: 2px; }
        header button { width: 20px; height: 20px; color: #fff; }
        .frame { flex: 1; display: grid; grid-template-columns: 250px 506px; gap: 30px; margin: 4px 2px 0 3px; padding: 16px 14px 18px; border: 2px solid #fff; border-radius: 7px; background: #25282c; }
        .title { display: flex; align-items: center; gap: 6px; height: 20px; margin-bottom: 8px; font-size: 12px; font-weight: 600; }
        .title::after { content: ""; flex: 1; height: 1px; background: #66686a; }
        .left, .right { display: flex; flex-direction: column; min-height: 0; }
        .tools { display: flex; justify-content: space-between; margin-bottom: 5px; }
        .combo { display: flex; align-items: center; height: 25px; border: 1px solid #5c5e61; border-radius: 2px; background: #1a1c1e; padding: 0 7px; }
        .combo select { flex: 1; height: 23px; }
        .add { width: 175px; gap: 8px; padding-left: 6px; }
        .add select { font-style: italic; }
        .pair { display: flex; border: 1px solid #5c5e61; border-radius: 2px; background: #35373b; }
        .pair button { width: 24px; height: 23px; }
        .pair button:first-child { color: #77797c; }
        .pair button + button { border-left: 1px solid #515356; }
        ul { flex: 1; margin: 0; padding: 7px 0 0; list-style: none; border: 1px solid #77797b; border-radius: 2px; }
        li { display: flex; align-items: center; gap: 6px; height: 25px; color: #ececec; }
        .group { padding-left: 31px; color: #7b7d80; }
        .item { padding-left: 49px; }
        .root { padding-left: 29px; }
        .picked { padding-left: 47px; }
        .picked span { padding: 4px 4px 5px; border-radius: 3px; background: #f2f4f4; color: #16181a; }
        h3 { height: 20px; margin: 0 0 8px; font: 700 14px/20px "Liberation Sans", sans-serif; color: #fff; }
        .btn { height: 25px; border: 1px solid #5c5e61; border-radius: 2px; background: #44464a; }
        .line { display: grid; grid-template-columns: 125px 100px 63px 118px 100px; align-items: center; height: 25px; margin-bottom: 5px; }
        .line > :nth-last-child(2) { grid-column: 4; }
        .line .btn { grid-column: 1 / 3; }
        .line input { min-width: 0; height: 25px; padding: 0 6px; border: 0; border-radius: 2px; background: #323438; outline: none; font-size: 12px; }
        .off { color: #5f6163; }
        .line .off { padding-left: 5px; }
        .line .combo { grid-column: 2; background: none; }
        .check { display: flex; align-items: center; gap: 10px; height: 25px; margin-bottom: 5px; padding-left: 4px; }
        input[type=checkbox] { appearance: none; flex: none; width: 17px; height: 17px; border: 2px solid #c6c8ca; background: #17191b; }
        .check.off input { border-color: #55575a; background: none; }
        .ports { display: flex; justify-content: space-between; align-items: center; margin-bottom: 5px; }
        .ports .title { width: 325px; height: 25px; margin: 0; }
        .ports .btn { width: 150px; }
        table { width: 100%; table-layout: fixed; border-collapse: separate; border-spacing: 0; font-size: 11px; line-height: 16px; color: #ececec; }
        th, td { padding: 0; text-align: left; font-weight: 400; white-space: nowrap; }
        th { height: 16px; padding-left: 5px; background: #3c3e41; border: 0 solid #25282c; border-width: 0 1px; }
        td { height: 19px; padding-left: 4px; border-bottom: 1px solid #3a3c3f; }
        td:nth-child(4) { padding-left: 18px; }
        td input[type=checkbox] { display: grid; width: 13px; height: 13px; border-width: 1px; }
        td input:checked::before { content: ""; width: 4px; height: 8px; margin: 0 0 0 4px; border: solid #fff; border-width: 0 2px 2px 0; transform: rotate(35deg); }
        .actions { display: flex; justify-content: space-between; margin-top: auto; }
        .actions .btn { width: 100px; }
        .actions .ghost { background: #2b2e31; color: #707275; }
        footer { display: flex; justify-content: flex-end; gap: 8px; padding: 8px 7px; }
        footer button { width: 80px; height: 23px; border: 1px solid #fff; outline: 1px solid #c9c9c9; outline-offset: -2px; background: #fff; color: #111; }
        footer .ok { background: #e0eef9; outline-color: #1575b8; }
    `;
    static html = `
        <header>${icon('logo')}<h2>スタジオ設定</h2>${iconBtn('close', '閉じる', 11)}</header>
        <div class="frame">
            <section class="left">
                <div class="title">デバイス</div>
                <div class="tools">
                    <span class="combo add">${icon('plus', 11)}<select aria-label="デバイスを追加"><option>デバイスを追加</option></select>${icon('tri', 10)}</span>
                    <div class="pair">${iconBtn('bin', '削除', 14)}${iconBtn('rewind', 'リセット', 14)}</div>
                </div>
                <ul>${DEVICES.map(([cls, label, ic]) => `<li class="${cls}">${ic ? icon(ic) : ''}<span>${label}</span></li>`).join('')}</ul>
            </section>
            <section class="right">
                <h3>Steinberg built-in ASIO Driver</h3>
                <div class="line"><button type="button" class="btn">コントロールパネル</button><label for="lat-in">入力のレイテンシー</label><input id="lat-in" value="10.000 ms" readonly></div>
                <div class="line">
                    <label class="off" for="clk">クロックソース</label>
                    <span class="combo off"><select id="clk"><option>Internal</option></select>${icon('tri', 10)}</span>
                    <label for="lat-out">出力のレイテンシー</label><input id="lat-out" value="20.000 ms" readonly>
                </div>
                <label class="check"><input type="checkbox">外部クロック</label>
                <label class="check off"><input type="checkbox" disabled>ダイレクトモニタリング</label>
                <div class="ports"><div class="title">ポート</div><button type="button" class="btn">リセット</button></div>
                <table>
                    <colgroup><col style="width:35px"><col style="width:190px"><col style="width:150px"><col style="width:50px"><col style="width:51px"><col></colgroup>
                    <tr><th>I/O</th><th>ポートシステム名</th><th>表示名</th><th>表示</th><th>状況</th><th></th></tr>
                    ${[['イン', ''], ['アウト', 'Out 1-2 (MOTU M Series) 1'], ['アウト', 'Out 1-2 (MOTU M Series) 2']].map(([io, n]) =>
                        `<tr><td>${io}</td><td>${n}</td><td>${n}</td><td><input type="checkbox" checked aria-label="表示"></td><td>アクティブ</td><td></td></tr>`).join('')}
                </table>
                <div class="actions"><button type="button" class="btn">リセット</button><button type="button" class="btn ghost" disabled>適用</button></div>
            </section>
        </div>
        <footer><button type="button" class="ok">OK</button><button type="button">キャンセル</button></footer>`;
}

customElements.define('ui-icon', UiIcon);
customElements.define('tab-strip', TabStrip);
customElements.define('tab-zone', TabZone);
customElements.define('photo-toolbar', PhotoToolbar);
customElements.define('lyric-sheet', LyricSheet);
customElements.define('photo-footer', PhotoFooter);
customElements.define('photo-viewer', PhotoViewer);
customElements.define('daw-menu', DawMenu);
customElements.define('daw-tools', DawTools);
customElements.define('daw-status', DawStatus);
customElements.define('track-zone', TrackZone);
customElements.define('transport-bar', TransportBar);
customElements.define('daw-window', DawWindow);
customElements.define('studio-dialog', StudioDialog);
customElements.define('desk-top', DeskTop);
</script>
</body>
</html>
